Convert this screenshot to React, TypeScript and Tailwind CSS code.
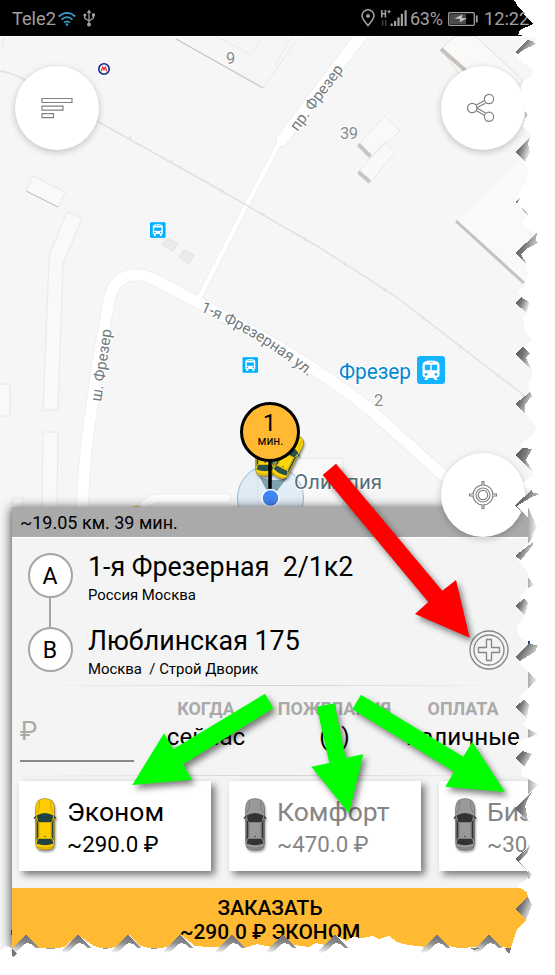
import React from "react";

function StatusBar() {
  return (
    <div className="relative flex h-[36px] items-center bg-black pl-[12px] text-[18.2px] leading-[22px] text-[#a0a0a0]">
      <span className="w-[46px] pt-[2px]">Tele2</span>
      <svg width="18" height="14" viewBox="0 0 18 14" className="mt-[1px]" fill="none" stroke="#3d9ccc" strokeWidth="1.7">
        <path d="M.7 4.5Q9-2.6 17.3 4.5M3.5 7.6Q9 2.8 14.5 7.6M6 10.6Q9 8 12 10.6" />
        <circle cx="9" cy="12.5" r="1.3" fill="#3d9ccc" stroke="none" />
      </svg>
      <svg width="12" height="18" viewBox="0 0 12 18" className="ml-[7px]" fill="none" stroke="#a0a0a0" strokeWidth="1.3">
        <path d="M6 3v12M1.7 7v2.2L6 12l4.3-2.8V7" />
        <path d="M3.7 4 6 .5 8.3 4Z" fill="#a0a0a0" stroke="none" />
        <circle cx="6" cy="15.5" r="2" fill="#a0a0a0" stroke="none" />
        <circle cx="1.9" cy="6" r="1.6" fill="#a0a0a0" stroke="none" />
        <path d="M9 4.5h3v3H9Z" fill="#a0a0a0" stroke="none" />
      </svg>
      <svg width="14" height="18" viewBox="0 0 14 18" className="ml-[266px]" fill="none" stroke="#a0a0a0" strokeWidth="1.6">
        <path d="M7 16.5C3.5 12.5 1 9.8 1 6.8a6 6 0 0 1 12 0c0 3-2.500 5.700-6 9.700Z" />
        <circle cx="7" cy="7" r="1.9" fill="#a0a0a0" stroke="none" />
      </svg>
      <svg width="28" height="18" viewBox="0 0 28 18" className="ml-[5px]" fill="#a0a0a0">
        <path d="M1 1h1.600v3h2V1h1.600v7.500H4.600v-3h-2v3H1ZM7.500 2h3v1.200h-3ZM8.400 1h1.200v3.200H8.400Z" />
        <path d="M2 11h1.300v6H2ZM5 11h1.300v6H5Z" fill="#444" />
        <path d="M10.500 14.500h2.200V17h-2.200ZM14 12h2.200v5H14ZM17.400 8.500h2.200V17h-2.200ZM20.800 4.800H23V17h-2.200ZM24.500 1.200h2.200V17h-2.200Z" />
      </svg>
      <span className="ml-[2px] w-[37px] pt-[2px] text-[18px] tracking-[-0.3px]">63%</span>
      <svg width="30" height="14" viewBox="0 0 30 14" className="ml-[1px] mt-[1px]" fill="none" stroke="#a0a0a0">
        <rect x=".7" y=".7" width="25.600" height="12.600" rx="1" strokeWidth="1.3" />
        <path d="M2 2h16v10H2Z" fill="#4b4b4b" stroke="none" />
        <path d="m6.500 6.500 8-4-.8 3.700h5.500l-7.500 4 .6-3.300Z" fill="#c8c8c8" stroke="none" />
        <path d="M28.800 3.500v7" strokeWidth="1.800" />
      </svg>
      <span className="ml-[6px] pt-[2px]">12:22</span>
    </div>
  );
}

function BusStop({ x, y }: { x: number; y: number }) {
  return (
    <g transform={`translate(${x} ${y})`}>
      <rect x="-8.300" y="-8.300" width="16.600" height="16.600" rx="1.500" fill="#00b0ff" stroke="#fff" strokeWidth="1" />
      <path d="M-5-3.500Q-5-6 0-6T5-3.500V4H4v2H2V4h-4v2h-2V4h-1Z" fill="#fff" />
      <path d="M-3.600-2.500h7.200v3.300h-7.200Z" fill="#00b0ff" />
      <path d="M-3-4.700h6" stroke="#00b0ff" strokeWidth=".7" />
      <circle cx="-3" cy="2.600" r=".8" fill="#00b0ff" />
      <circle cx="3" cy="2.600" r=".8" fill="#00b0ff" />
    </g>
  );
}

function CarShape({ body, glass }: { body: string; glass: string }) {
  return (
    <>
      <path d="M4 2.500Q11-1.500 18 2.500q2.500 3 2.500 8V43q0 6.500-3 8-6.500 2-13 0-3-1.500-3-8V10.500q0-5 2.500-8Z" fill={body} stroke="#00000055" strokeWidth=".8" />
      <path d="M0 20.500l2-2M22 20.500l-2-2" stroke={glass} strokeWidth="1.600" />
      <path d="M5.500 3Q6 10 3 15M16.500 3Q16 10 19 15" stroke="#00000030" fill="none" />
      <path d="M2.500 17.500Q11 12.500 19.500 17.500L17.500 24h-13Z" fill={glass} />
      <path d="M2.500 20 4.300 25v14L2.500 43ZM19.500 20l-1.800 5v14l1.800 4Z" fill={glass} />
      <path d="M5 24.500h12v16H5Z" fill={body} stroke="#00000035" strokeWidth=".8" />
      <path d="M4 41h14l1.500 4.500Q11 49 2.500 45.500Z" fill={glass} />
      <path d="M3 49q8 2.500 16 0" stroke="#00000030" fill="none" />
      <circle cx="11" cy="38.500" r=".7" fill={glass} />
    </>
  );
}

function CityMap() {
  const ticks = [[4, 72], [130, 138], [171, 161], [181, 167], [222, 191], [263, 215], [305, 239], [345, 264], [385, 290], [423, 318], [460, 347], [498, 376]];
  return (
    <svg className="absolute left-0 top-[36px]" width="555" height="919" viewBox="0 36 555 919" fontFamily="Roboto, sans-serif">
      <path d="M0 36h555v919H0Z" fill="#f6f6f6" />
      <path d="M0 36.500h555" stroke="#fff" />

      {/* building outlines */}
      <g fill="#f9f9f9" stroke="#e8e8e8">
        <path d="M33 176 65 192 58 207 26 191Z" />
        <path d="M67 212 82 218Q67 255 63 264L58 410H43L49 260Q50 250 53 246Z" />
        <path d="M43 432H58L51 955H36Z" />
        <path d="M-3 384H10V416H-3ZM12 498H23V520H12Z" />
        <path d="M176 39 263 88 300 36M216 36 251 55 262 37" fill="none" />
        <path d="M2 49 4 36M275 66 292 36" fill="none" />
        <path d="M385 116 400 131 371 157 358 145ZM385 142 395 152 370 183 358 172Z" />
        <path d="M535 142 456 221 530 292V142Z" stroke="#efefef" />
        <path d="M258 458H343V507H258Z" />
      </g>
      <path d="M441 49 455 36H475L523 80 490 115Z" fill="#faf9f7" stroke="#e1ded9" />
      <path d="M441 49 466 71" stroke="#c6c3bf" strokeWidth="4" />
      <path d="m176 39 87 49M26 191l32 16" stroke="#c6c6c6" strokeWidth="1.200" fill="none" />
      <path d="m358.500 144.500 12 12M358.500 172l11.500 10" stroke="#c6c6c6" strokeWidth="4" />
      <path d="m456 221 68 62" stroke="#c2c2c2" strokeWidth="3" />
      <path d="m168 238 10 6-5 7-11-6ZM184 250l10 5-5 9-10-7Z" fill="#ebebeb" stroke="#e2e2e2" />

      {/* roads: outline first, then surface */}
      <g fill="none" stroke="#ececec" strokeLinecap="round">
        <path d="M363 33 282 140" strokeWidth="13" />
        <path d="M280 142 246 206 199 298" strokeWidth="6" />
        <path d="M82 520C83 450 92 410 98 362L109 300Q115 274 137 275 148 275 157 281L205 306 276 345Q346 388 375 414L455 486" strokeWidth="12.500" />
        <path d="M137 515Q145 498 162 498H226" strokeWidth="9" />
      </g>
      <g fill="none" stroke="#fff" strokeLinecap="round">
        <path d="M363 33 282 140" strokeWidth="11.500" />
        <path d="M280 142 246 206 199 298" strokeWidth="4.500" />
        <path d="M82 520C83 450 92 410 98 362L109 300Q115 274 137 275 148 275 157 281L205 306 276 345Q346 388 375 414L455 486" strokeWidth="11" />
        <path d="M137 515Q145 498 162 498H226" strokeWidth="7.500" />
      </g>
      <g fill="none" stroke="#dfe1e3" strokeWidth="1.500">
        <path d="M0 71Q12 73 25 80L97 121 222 191 322 249 395 296 530 400" />
        {ticks.map(([x, y]) => <path key={x} d={`M${x + 1} ${y - 1.700}l-2 3.400`} />)}
      </g>
      <path d="M132 507q5-3 10 0Z" fill="#e9c46c" />

      {/* street names and house numbers */}
      <g fill="#737b7f" stroke="#fff" strokeWidth="2.500" paintOrder="stroke" strokeLinejoin="round">
        <text transform="translate(297.500 132) rotate(-53.500)" fontSize="15.500" textLength="78" lengthAdjust="spacingAndGlyphs">пр. Фрезер</text>
        <text transform="translate(101 402) rotate(-81.500)" fontSize="15.500" textLength="73" lengthAdjust="spacingAndGlyphs">ш. Фрезер</text>
        <path id="street" d="M200 311Q260 337 309 377" fill="none" stroke="none" />
        <text fontSize="15.500"><textPath href="#street" textLength="127" lengthAdjust="spacingAndGlyphs">1-я Фрезерная ул.</textPath></text>
      </g>
      <g fill="#8a8a8a" stroke="#fff" strokeWidth="2" paintOrder="stroke" fontSize="16.500">
        <text x="226" y="64">9</text>
        <text x="340" y="138.500" textLength="18">39</text>
        <text x="374" y="406">2</text>
      </g>
      <text x="339" y="379" fontSize="22" textLength="72" lengthAdjust="spacingAndGlyphs" fill="#0288d1" stroke="#fff" strokeWidth="2" paintOrder="stroke">Фрезер</text>

      <circle cx="104" cy="69" r="5.200" fill="#fff" stroke="#122a85" strokeWidth="1.600" />
      <path d="m101.300 71.300 1.400-4.300L104 69.700l1.300-2.700 1.400 4.300" fill="none" stroke="#e53935" strokeWidth="1.300" />
      <BusStop x={157.800} y={230} />
      <BusStop x={250.300} y={365} />
      <g transform="translate(431 370)">
        <rect x="-14" y="-14" width="28" height="28" rx="3" fill="#12b4ff" />
        <path d="M-8.500-5Q-8.500-9.500 0-9.500T8.500-5V5Q8.500 7.500 5 7.500L7 10H4L2.500 8h-5L-4 10h-3l2-2.500Q-8.500 7.500-8.500 5Z" fill="#fff" />
        <path d="M-6-5h5v5h-5ZM1-5h5v5H1ZM-1.800-7.500h3.600" fill="#12b4ff" stroke="#12b4ff" strokeWidth=".5" />
        <circle cx="-5" cy="4.300" r="1.400" fill="#12b4ff" /><circle cx="5" cy="4.300" r="1.400" fill="#12b4ff" />
      </g>

      {/* user location with heading cone, cabs and pickup marker */}
      <circle cx="270.500" cy="498" r="33" fill="#b9d8f0" fillOpacity=".35" stroke="#8dbbe0" />
      <path d="M259 476Q273 483 287 478L271 499Z" fill="#7fa1b2" />
      <text x="294" y="489" fontSize="21" textLength="88" lengthAdjust="spacingAndGlyphs" fill="#546e7a" stroke="#fff" strokeWidth="2" paintOrder="stroke">Олимпия</text>
      <g className="drop-shadow-[1px_2px_1px_rgba(0,0,0,0.4)]">
        <g transform="translate(254 424)"><CarShape body="#ffd60a" glass="#27504f" /></g>
        <g transform="translate(290 431) rotate(27) scale(.9)"><CarShape body="#ffd60a" glass="#27504f" /></g>
      </g>
      <path d="M270 460v33" stroke="#000" strokeWidth="3.500" />
      <circle cx="270" cy="432" r="28.500" fill="#ffb932" stroke="#000" strokeWidth="3" />
      <circle cx="270.500" cy="498" r="8.500" fill="#4285f4" stroke="#fff" strokeWidth="1.500" />
      <text x="269.500" y="430.500" fontSize="23" textAnchor="middle">1</text>
      <text x="270.500" y="445" fontSize="12" textAnchor="middle">мин.</text>
    </svg>
  );
}

function RoundButton({ place, children }: { place: string; children: React.ReactNode }) {
  return (
    <button className={`absolute grid size-[84px] place-items-center rounded-full bg-white shadow-[0_2px_7px_rgba(0,0,0,0.22)] ${place}`}>
      {children}
    </button>
  );
}

function Address({ street, city, gap }: { street: string; city: string; gap: string }) {
  return (
    <div className={gap}>
      <div className="h-[30px] text-[26.8px] leading-[30px] whitespace-pre">{street}</div>
      <div className="mt-[3px] h-[20px] text-[14.9px] leading-[20px] whitespace-pre">{city}</div>
    </div>
  );
}

function PointLetter({ children }: { children: string }) {
  return <div className="grid size-[45px] place-items-center rounded-full border-2 border-[#a5a5a5] bg-white pt-[1px] text-[23px] leading-none">{children}</div>;
}

function Option({ label, value, width }: { label: string; value: string; width: string }) {
  return (
    <div className={`flex flex-col items-center ${width}`}>
      <div className="h-[22px] text-[17.9px] font-bold leading-[21px] text-[#aaa]">{label}</div>
      <div className="mt-[2px] text-[24.2px] leading-[30px]">{value}</div>
    </div>
  );
}

function TariffCard({ name, price, active }: { name: string; price: string; active?: boolean }) {
  return (
    <div className="flex h-[90px] w-[192px] shrink-0 bg-white pl-[14px] pt-[16px] shadow-[4px_4px_7px_rgba(0,0,0,0.5)]">
      <svg width="24" height="54" viewBox="-1 -1 24 54" className="drop-shadow-[1px_2px_1px_rgba(0,0,0,0.4)]">
        <CarShape body={active ? "#fccc00" : "#999"} glass={active ? "#21423f" : "#333"} />
      </svg>
      <div className={active ? "ml-[10px] text-black" : "ml-[10px] text-[#858585]"}>
        <div className="h-[30px] text-[26.5px] leading-[30px]">{name}</div>
        <div className="mt-[3px] h-[28px] text-[22.3px] leading-[28px]">{price}</div>
      </div>
    </div>
  );
}

function OrderPanel() {
  return (
    <div className="relative ml-[12px] mt-[471px] h-[441px] w-[516px] bg-[#f4f4f4] shadow-[-1px_1px_10px_rgba(0,0,0,0.7)]">
      <div className="h-[30px] bg-[#aaa] pl-[8px] text-[18px] leading-[31px]">~19.05 км. 39 мин.</div>
      <div className="flex h-[148px] border-t border-white">
        <div className="flex w-[76px] flex-col items-center pt-[15px]">
          <PointLetter>A</PointLetter>
          <div className="h-[29px] w-[2px] bg-[#a5a5a5]" />
          <PointLetter>B</PointLetter>
        </div>
        <div className="w-[381px] pt-[14px]">
          <Address street="1-я Фрезерная  2/1к2" city="Россия Москва" gap="" />
          <Address street="Люблинская 175" city="Москва  / Строй Дворик" gap="mt-[21px]" />
        </div>
        <svg width="40" height="40" viewBox="0 0 40 40" className="mt-[92px]" fill="none" stroke="#858585" strokeWidth="1.300">
          <circle cx="20" cy="20" r="19" /><circle cx="20" cy="20" r="15" />
          <path d="M17.500 9.500h5v8h8v5h-8v8h-5v-8h-8v-5h8Z" strokeLinejoin="round" />
        </svg>
      </div>
      <div className="mx-[12px] h-px bg-linear-to-r from-transparent via-[#d2d2d2] to-transparent" />
      <div className="flex h-[89px]">
        <div className="ml-[8px] h-[76px] w-[114px] shrink-0 border-b-2 border-[#888] pt-[29px] text-[26px] leading-[32px] text-[#aaa]">₽</div>
        <div className="flex shrink-0 pt-[12px]">
          <Option label="КОГДА" value="сейчас" width="w-[144px]" />
          <Option label="ПОЖЕЛАНИЯ" value="(0)" width="w-[113px]" />
          <Option label="ОПЛАТА" value="наличные" width="w-[144px]" />
        </div>
      </div>
      <div className="mx-[12px] h-px bg-linear-to-r from-transparent via-[#d2d2d2] to-transparent" />
      <div className="flex h-[112px] gap-[18px] overflow-hidden pl-[7px] pt-[5px]">
        <TariffCard name="Эконом" price="~290.0 ₽" active />
        <TariffCard name="Комфорт" price="~470.0 ₽" />
        <TariffCard name="Бизнес" price="~300.0 ₽" />
      </div>
      <button className="block h-[60px] w-full bg-[#ffb932] pt-[3px] text-center text-[20.9px] font-medium leading-[24px]">
        <span className="block">ЗАКАЗАТЬ</span>
        <span className="block">~290.0 ₽ ЭКОНОМ</span>
      </button>
    </div>
  );
}

/* Hand-drawn pointers laid over the screen. */
function Pointers() {
  return (
    <svg className="absolute inset-0 drop-shadow-[3px_4px_3px_rgba(0,0,0,0.5)]" width="555" height="975" viewBox="0 0 555 975">
      <path d="M322.700 475 336 463.700 442.300 590.700 456 580 469.700 637.700 415 614 428.300 602Z" fill="#f00" />
      <g fill="#0f0">
        <path d="M265 693.700 273.300 708.300 183.300 764.300 192 779.700 132.300 785 164 733.300 173.300 749Z" />
        <path d="M316.700 706.700 334.300 703.300 345.700 757.700 363.300 754.300 349 813.300 311.300 766.700 329.300 763Z" />
        <path d="M361 694.700 352.300 709.300 454 771.700 445.300 786.700 505 792 472.300 741.700 463.300 756.700Z" />
      </g>
    </svg>
  );
}

/* Ripped-paper border on the right and bottom sides. */
function TornEdge() {
  const rips = [
    "515,52 527,40 532,41 536,44 532,46 525,49 518,54",
    "515,152 530,138 528,144 530,152 525,162",
    "515,202 520,198 517,204",
    "515,253 537,233 536,240 538,243 528,248 521,254 527,265",
    "515,303 521,297 529,302 527,313",
    "515,354 523,347 530,353 526,358 533,372",
    "515,404 530,392 532,396 525,405 525,413",
    "515,455 523,448 532,449 526,460 535,475",
    "515,505 532,490 533,493 540,494 532,497 517,506 523,513 522,513",
    "515,556 533,542 533,545 521,560",
    "515,606 524,599 528,603 525,615",
    "515,657 528,644 538,645 535,652 520,661",
    "515,707 524,700 529,705 527,718",
    "515,758 522,751 532,754 524,767",
    "515,808 534,789 528,799 525,806 528,820 531,825",
    "515,859 530,846 527,854 519,861 527,870",
    "515,909 528,897 532,905 526,920",
  ];
  const tabs = ["525,111 528,115 525,119", "528,507 537,527 531,533 528,542", "528,577 534,585 528,588", "528,672 537,680 528,688", "528,729 538,734 528,738", "528,779 538,784 528,795", "528,870 532,875 528,880"];
  const teeth = [26, 78, 128, 180, 232, 283, 335, 437, 489];
  return (
    <svg className="absolute inset-0" width="555" height="975" viewBox="0 0 555 975" shapeRendering="crispEdges">
      <defs>
        <linearGradient id="rip" x1="0" y1="0.200" x2="1" y2="0.700">
          <stop offset="0" stopColor="#555" /><stop offset=".4" stopColor="#777" /><stop offset="1" stopColor="#f4f4f4" />
        </linearGradient>
        <linearGradient id="tab"><stop offset="0" stopColor="#aaa" /><stop offset="1" stopColor="#f4f4f4" /></linearGradient>
        <linearGradient id="tooth" x1=".6" y1="0" x2=".3" y2="1">
          <stop offset="0" stopColor="#707070" /><stop offset=".45" stopColor="#8c8c8c" /><stop offset="1" stopColor="#efefef" />
        </linearGradient>
      </defs>
      <path fill="#fff" d="M555 0H514L519 8 525 13 524 15 533 24 520 30 518 35 535 37 536 44 518 54 514 55 520 60 525 64 533 70 532 78 524 80 521 88 525 110 525 119 523 127 532 134 530 138 515 152 525 162 528 170 527 180 523 187 515 202 520 207 528 215 522 223 527 230 537 233 515 253 527 265 528 275 524 287 517 293 522 297 515 303 527 313 523 318 525 332 532 340 522 347 515 354 533 372 529 383 528 393 515 404 526 413 536 427 535 433 520 445 522 448 515 455 534 475 524 482 525 488 532 490 515 505 528 518 537 527 530 542 515 556 518 560 528 573V587L520 597 523 600 515 606 525 615 517 627 520 638 529 643 515 657 518 662 528 672V688L519 698 523 701 515 707 527 718 523 725 528 729V738L520 740 515 745 521 752 515 758 523 767 521 775 528 778V795L515 808 528 822 523 832 529 846 515 859 523 868 528 872V878L517 886 527 892 528 897 515 909 526 920 517 930 514 938 511 948 500 947 489 935 477 947 459 948 448 946 437 935 426 947 408 945 397 942 389 936 379 939 373 936 362 938 353 937 346 941 335 935 325 945 316 943 309 947 294 945 283 935 271 947 257 944 245 948 232 935 219 947 208 947 195 946 181 935 167 947 153 949 141 946 129 935 115 947 105 949 94 946 78 935 64 947 52 949 40 948 26 935 12 948 5 946 0 952V975H555Z" />
      {rips.map((p) => <polygon key={p} points={p} fill="url(#rip)" />)}
      {tabs.map((p) => <polygon key={p} points={p} fill="url(#tab)" />)}
      {teeth.map((x) => (
        <path key={x} d={`M${x} 935l14 13-5 0-4-4-4-1-5 3-5 5-6 2-2-2 3-3Z`} fill="url(#tooth)" />
      ))}
      <path d="M505 948h6l-1 5h-2ZM12 948l5 6-4 3-1-3ZM470 948h10l-6 2Z" fill="#777" />
      <path d="m522 208 6 7" stroke="#bbb" />
      <path d="M12 929q-3 4 0 7Z" fill="#21497d" />
      <path d="M528 641h2v3h-2Z" fill="#234b7e" />
    </svg>
  );
}

export default function App() {
  return (
    <div className="relative h-[975px] w-[555px] overflow-hidden bg-white text-black [font-family:Roboto,sans-serif]">
      <CityMap />
      <StatusBar />
      <OrderPanel />
      <RoundButton place="left-[15px] top-[66px]">
        <svg width="32" height="22" viewBox="0 0 32 22" fill="none" stroke="#808080" strokeWidth="1.200">
          <path d="M1 1.500h30v4H1ZM1 9.200h21v4H1ZM1 16.700h11.500v4H1Z" />
        </svg>
      </RoundButton>
      <RoundButton place="left-[441px] top-[66px]">
        <svg width="30" height="30" viewBox="0 0 30 30" className="mr-[4px]" fill="none" stroke="#808080" strokeWidth="1.200">
          <path d="m9.200 12.500 9-4.700M10.500 14.800l9-4.600M9.200 17l9.200 5.200M10.500 14.800l9 5.100" />
          <circle cx="6.200" cy="15" r="4.700" fill="#fff" /><circle cx="23" cy="6" r="4.600" fill="#fff" /><circle cx="23" cy="23.800" r="4.600" fill="#fff" />
        </svg>
      </RoundButton>
      <RoundButton place="left-[441px] top-[453px]">
        <svg width="30" height="30" viewBox="0 0 30 30" fill="none" stroke="#808080" strokeWidth="1.200">
          <circle cx="15" cy="15" r="10" /><circle cx="15" cy="15" r="7" /><circle cx="15" cy="15" r="4.700" />
          <path d="M14 5V1.500h2V5M14 25v3.500h2V25M5 14H1.500v2H5M25 14h3.500v2H25" fill="#fff" />
        </svg>
      </RoundButton>
      <Pointers />
      <TornEdge />
    </div>
  );
}
